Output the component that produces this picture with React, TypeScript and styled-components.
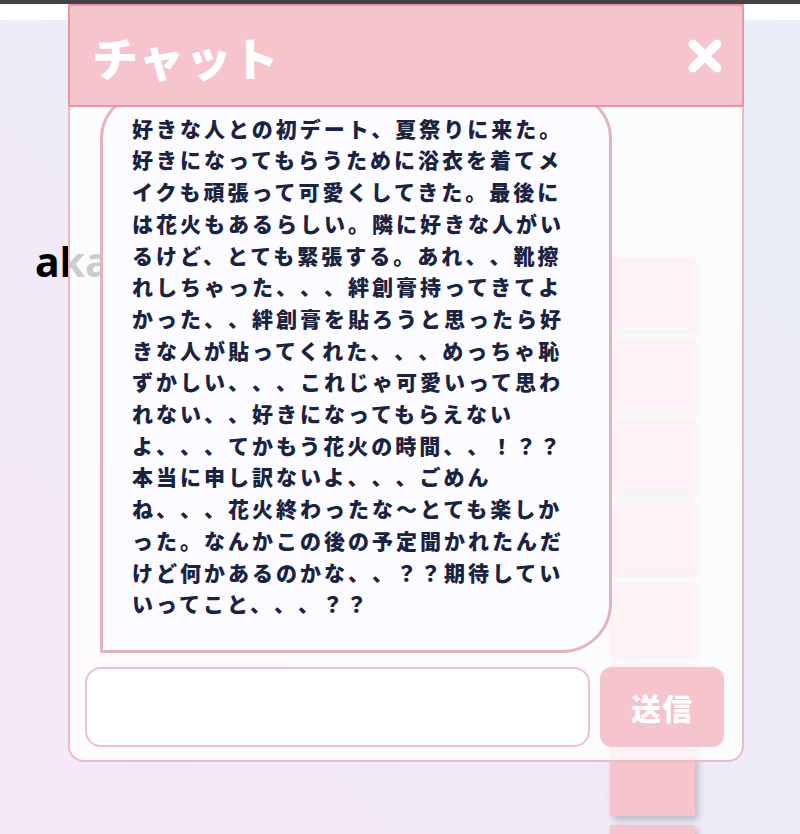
import styled, { createGlobalStyle } from "styled-components";

const GlobalStyle = createGlobalStyle`
  html, body {
    margin: 0;
    height: 100%;
    overflow: hidden;
  }
  #root {
    height: 100%;
  }
  * {
    box-sizing: border-box;
  }
`;

const message =
  "好きな人との初デート、夏祭りに来た。好きになってもらうために浴衣を着てメイクも頑張って可愛くしてきた。最後には花火もあるらしい。隣に好きな人がいるけど、とても緊張する。あれ、、靴擦れしちゃった、、、絆創膏持ってきてよかった、、絆創膏を貼ろうと思ったら好きな人が貼ってくれた、、、めっちゃ恥ずかしい、、、これじゃ可愛いって思われない、、好きになってもらえないよ、、、てかもう花火の時間、、！？？本当に申し訳ないよ、、、ごめんね、、、花火終わったな〜とても楽しかった。なんかこの後の予定聞かれたんだけど何かあるのかな、、？？期待していいってこと、、、？？";

const cards = [1, 2, 3, 4, 5, 6, 7, 8];

const CloseIcon = () => (
  <svg width="38" height="38" viewBox="0 0 38 38">
    <path
      d="M7 7 L31 31 M31 7 L7 31"
      stroke="#fff"
      strokeWidth="9"
      strokeLinecap="round"
      fill="none"
    />
  </svg>
);

export default function App() {
  return (
    <Root>
      <GlobalStyle />
      <TopLine />
      <HeaderStrip />
      <Main>
        <UserName>akane</UserName>
        <CardColumn>
          {cards.map((c) => (
            <Card key={c} />
          ))}
        </CardColumn>
      </Main>

      <Modal>
        <ModalHeader>
          <Title>チャット</Title>
          <CloseButton aria-label="close">
            <CloseIcon />
          </CloseButton>
        </ModalHeader>
        <ModalBody>
          <Messages>
            <Bubble>
              <BubbleText>{message}</BubbleText>
            </Bubble>
          </Messages>
          <InputRow>
            <TextInput />
            <SendButton>送信</SendButton>
          </InputRow>
        </ModalBody>
      </Modal>
    </Root>
  );
}

const Root = styled.div`
  position: relative;
  height: 100%;
  display: flex;
  flex-direction: column;
  overflow: hidden;
`;

const TopLine = styled.div`
  height: 4px;
  background: #434347;
  flex-shrink: 0;
`;

const HeaderStrip = styled.div`
  height: 16px;
  background: #ffffff;
  flex-shrink: 0;
`;

const Main = styled.div`
  flex: 1;
  display: flex;
  justify-content: space-between;
  align-items: flex-start;
  padding: 0 105px 0 35px;
  background: linear-gradient(45deg, #f6e7f8 0%, #efebf8 50%, #e9eef8 100%);
  overflow: hidden;
`;

const UserName = styled.div`
  margin-top: 213px;
  font-family: "Noto Sans", "Liberation Sans", sans-serif;
  font-weight: 700;
  font-size: 41px;
  letter-spacing: 0;
  color: #000;
`;

const CardColumn = styled.div`
  margin-top: 238px;
  width: 85px;
  display: flex;
  flex-direction: column;
  gap: 9px;
`;

const Card = styled.div`
  height: 72px;
  flex-shrink: 0;
  background: #f5c4cc;
  box-shadow: 3px 4px 7px rgba(0, 0, 0, 0.22);
`;

const Modal = styled.div`
  position: absolute;
  top: 4px;
  left: 68px;
  width: 676px;
  height: 758px;
  display: flex;
  flex-direction: column;
`;

const ModalHeader = styled.div`
  height: 103px;
  flex-shrink: 0;
  display: flex;
  align-items: center;
  justify-content: space-between;
  padding: 0 18px 0 22px;
  background: #f5c4cc;
  border: 2px solid #e9959f;
`;

const Title = styled.h2`
  margin: 0;
  font-family: "Noto Sans CJK JP", "Noto Sans", sans-serif;
  font-weight: 900;
  font-size: 46px;
  letter-spacing: 1px;
  color: #ffffff;
`;

const CloseButton = styled.button`
  border: none;
  background: none;
  padding: 0;
  display: flex;
  cursor: pointer;
`;

const ModalBody = styled.div`
  flex: 1;
  min-height: 0;
  display: flex;
  flex-direction: column;
  padding: 0 18px 13px 15px;
  background: rgba(255, 255, 255, 0.8);
  border: 2px solid #f0bac2;
  border-top: none;
  border-radius: 0 0 16px 16px;
`;

const Messages = styled.div`
  flex: 1;
  min-height: 0;
  display: flex;
  flex-direction: column;
  justify-content: flex-end;
  align-items: flex-start;
  padding: 0 0 6px 15px;
  overflow: hidden;
`;

const Bubble = styled.div`
  flex-shrink: 0;
  padding: 19px 37px 30px 29px;
  background: #fcfbff;
  border: 3px solid #e4b3bc;
  border-radius: 48px 48px 50px 0;
`;

const BubbleText = styled.p`
  margin: 0;
  width: 440px;
  font-family: "Noto Sans CJK JP", "Noto Sans", sans-serif;
  font-weight: 900;
  font-size: 21px;
  line-height: 31.7px;
  letter-spacing: 3px;
  color: #1a2340;
  text-spacing-trim: space-all;
  line-break: strict;
`;

const InputRow = styled.div`
  flex-shrink: 0;
  margin-top: 8px;
  display: flex;
  gap: 10px;
  height: 80px;
`;

const TextInput = styled.input`
  flex: 1;
  height: 100%;
  border: 2px solid #f0c0c6;
  border-radius: 16px;
  background: #ffffff;
  padding: 0 16px;
  font-size: 20px;
  outline: none;
`;

const SendButton = styled.button`
  width: 124px;
  height: 100%;
  border: none;
  border-radius: 12px;
  background: #f5c4cc;
  color: #ffffff;
  font-family: "Noto Sans CJK JP", "Noto Sans", sans-serif;
  font-weight: 900;
  font-size: 30px;
  letter-spacing: 1px;
  cursor: pointer;
`;
